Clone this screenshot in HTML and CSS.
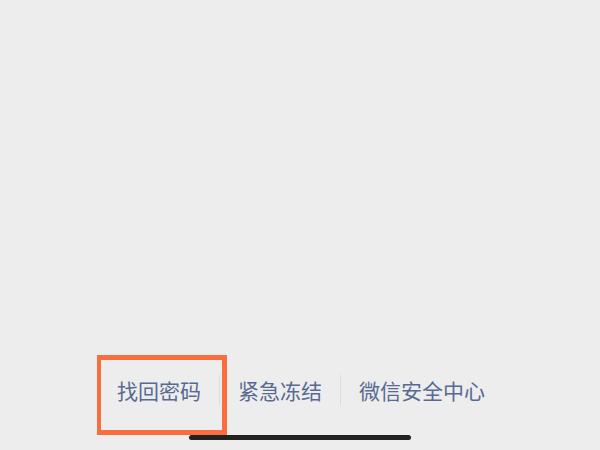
FILE: index.html
```html
<!DOCTYPE html>
<html lang="zh-CN">
<head>
<meta charset="utf-8">
<title>找回密码</title>
<link rel="stylesheet" href="styles.css">
</head>
<body>
<div class="screen">
  <div class="links">
    <a class="link link-marked">找回密码<span class="mark"></span></a>
    <span class="sep"></span>
    <a class="link">紧急冻结</a>
    <span class="sep"></span>
    <a class="link">微信安全中心</a>
  </div>
  <div class="home-area"><div class="home-bar"></div></div>
</div>
</body>
</html>
```

FILE: styles.css
```css
html, body {
  margin: 0;
  padding: 0;
  background: #ededed;
}
.screen {
  width: 600px;
  height: 450px;
  display: flex;
  flex-direction: column;
  justify-content: flex-end;
  font-family: "Noto Sans CJK SC", "Noto Sans", sans-serif;
}
.links {
  display: flex;
  justify-content: center;
  align-items: center;
  height: 30px;
  padding-left: 2px;
}
.link {
  position: relative;
  padding: 0 18px;
  font-size: 21px;
  line-height: 30px;
  color: #586a92;
  white-space: nowrap;
}
.sep {
  width: 1px;
  height: 30px;
  background: #dcdcdc;
}
.mark {
  position: absolute;
  left: -2px;
  right: -8px;
  top: -20px;
  bottom: -30px;
  border: 5px solid #f96e3f;
  border-left-width: 4px;
}
.home-area {
  height: 45px;
  display: flex;
  justify-content: center;
  padding-top: 30px;
  box-sizing: border-box;
}
.home-bar {
  width: 222px;
  height: 5px;
  border-radius: 3px;
  background: #222222;
}
```
